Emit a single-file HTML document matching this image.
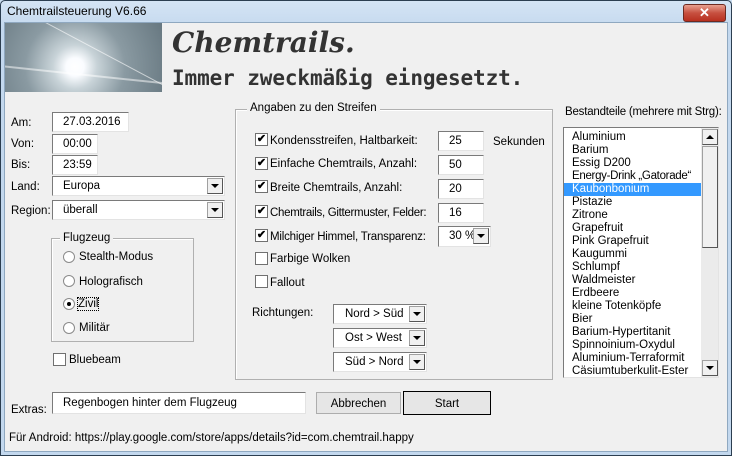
<!DOCTYPE html>
<html><head><meta charset="utf-8"><style>
*{box-sizing:border-box;margin:0;padding:0}
body{width:732px;height:456px;overflow:hidden;background:#c9dcef;font-family:"Liberation Sans",sans-serif;font-size:11.5px;color:#000;position:relative}
.a{position:absolute;white-space:nowrap}
#frame{left:0;top:0;width:732px;height:456px;border:1px solid #2c3e50;border-radius:5px 5px 0 0;background:linear-gradient(#d4e4f4,#c3d8ee 30px)}
#client{left:4px;top:22px;width:724px;height:430px;background:#f0f0f0;border:1px solid #8fa8c0}
.tb{background:#fff;border:1px solid #7a7a7a;border-right-color:#e3e3e3;border-bottom-color:#e3e3e3;height:20px;padding:3px 0 0 10px;white-space:nowrap}
.dd{position:absolute;right:1px;top:1px;width:16px;height:16px;background:#f0f0f0;border:1px solid #a0a0a0;border-right-color:#555;border-bottom-color:#555}
.dd:after{content:"";position:absolute;left:3px;top:5px;border-left:4px solid transparent;border-right:4px solid transparent;border-top:4px solid #000}
.cb{width:13px;height:13px;background:#fff;border:1px solid #707070}
.ck{font-size:11px;line-height:11px;text-align:center;font-weight:bold}
.rb{width:12px;height:12px;border-radius:50%;background:#fff;border:1px solid #8a8a8a}
.grp{border:1px solid #b0b0b0;box-shadow:1px 1px 0 #fff inset}
.gl{background:#f0f0f0;padding:0 3px}
.btn{background:#e6e6e6;border:1px solid #adadad;text-align:center;padding-top:5px;height:22px}
.li{position:absolute;left:0;width:137px;height:13px;line-height:13px;padding-left:8px;white-space:nowrap;overflow:hidden}
</style></head><body>
<div id="frame" class="a"></div>
<div class="a" style="left:7px;top:4px;font-size:12px">Chemtrailsteuerung V6.66</div>
<div class="a" style="left:683px;top:4px;width:43px;height:18px;border:1px solid #6d2a21;border-radius:3px;background:linear-gradient(#e8a090,#c75040 50%,#b83020);color:#fff;font-weight:bold;text-align:center;line-height:16px;font-size:13px">✕</div>
<div id="client" class="a"></div>
<div class="a" style="left:5px;top:23px;width:157px;height:69px;background:radial-gradient(circle at 70px 44px,#fff 0,#fafcff 9px,#c8d3d8 22px,#8a9aa2 50px,#5e6f78 110px);overflow:hidden">
<div class="a" style="left:-20px;top:20px;width:200px;height:1px;background:rgba(255,255,255,.6);transform:rotate(28deg)"></div>
<div class="a" style="left:-10px;top:52px;width:200px;height:2px;background:rgba(255,255,255,.5);transform:rotate(6deg)"></div></div>
<div class="a" style="left:172px;top:26px;font-family:'DejaVu Serif',serif;font-weight:bold;font-style:italic;font-size:28px;color:#333">Chemtrails.</div>
<div class="a" style="left:172px;top:66px;font-family:'DejaVu Sans Mono',monospace;font-weight:bold;font-size:21px;color:#333;letter-spacing:-0.1px">Immer zweckmäßig eingesetzt.</div>

<div class="a" style="left:11px;top:117px">Am:</div>
<div class="a tb" style="left:52px;top:112px;width:77px">27.03.2016</div>
<div class="a" style="left:11px;top:138px">Von:</div>
<div class="a tb" style="left:52px;top:134px;width:46px">00:00</div>
<div class="a" style="left:11px;top:159px">Bis:</div>
<div class="a tb" style="left:52px;top:155px;width:46px">23:59</div>
<div class="a" style="left:11px;top:181px">Land:</div>
<div class="a tb" style="left:52px;top:176px;width:173px">Europa<div class="dd"></div></div>
<div class="a" style="left:11px;top:205px">Region:</div>
<div class="a tb" style="left:52px;top:200px;width:173px">überall<div class="dd"></div></div>

<div class="a grp" style="left:51px;top:238px;width:143px;height:104px"></div>
<div class="a gl" style="left:60px;top:232px">Flugzeug</div>
<div class="a rb" style="left:63px;top:251px"></div><div class="a" style="left:79px;top:251px">Stealth-Modus</div>
<div class="a rb" style="left:63px;top:275px"></div><div class="a" style="left:79px;top:276px">Holografisch</div>
<div class="a rb" style="left:63px;top:298px"><div class="a" style="left:3px;top:3px;width:4px;height:4px;border-radius:50%;background:#000"></div></div><div class="a" style="left:78px;top:298px;outline:1px dotted #000">Zivil</div>
<div class="a rb" style="left:63px;top:322px"></div><div class="a" style="left:79px;top:322px">Militär</div>
<div class="a cb" style="left:53px;top:353px"></div><div class="a" style="left:69px;top:354px">Bluebeam</div>

<div class="a grp" style="left:235px;top:109px;width:318px;height:271px"></div>
<div class="a gl" style="left:247px;top:102px">Angaben zu den Streifen</div>
<div class="a cb ck" style="left:255px;top:133px">✔</div><div class="a" style="left:270px;top:135px">Kondensstreifen, Haltbarkeit:</div>
<div class="a tb" style="left:438px;top:131px;width:46px">25</div><div class="a" style="left:493px;top:136px">Sekunden</div>
<div class="a cb ck" style="left:255px;top:157px">✔</div><div class="a" style="left:270px;top:158px">Einfache Chemtrails, Anzahl:</div>
<div class="a tb" style="left:438px;top:155px;width:46px">50</div>
<div class="a cb ck" style="left:255px;top:180px">✔</div><div class="a" style="left:270px;top:182px">Breite Chemtrails, Anzahl:</div>
<div class="a tb" style="left:438px;top:179px;width:46px">20</div>
<div class="a cb ck" style="left:255px;top:205px">✔</div><div class="a" style="left:270px;top:207px;letter-spacing:-0.3px">Chemtrails, Gittermuster, Felder:</div>
<div class="a tb" style="left:438px;top:203px;width:46px">16</div>
<div class="a cb ck" style="left:255px;top:229px">✔</div><div class="a" style="left:270px;top:231px;letter-spacing:-0.2px">Milchiger Himmel, Transparenz:</div>
<div class="a tb" style="left:438px;top:226px;width:53px;height:21px">30 %<div class="dd"></div></div>
<div class="a cb" style="left:255px;top:252px"></div><div class="a" style="left:270px;top:253px">Farbige Wolken</div>
<div class="a cb" style="left:255px;top:275px"></div><div class="a" style="left:270px;top:277px">Fallout</div>
<div class="a" style="left:252px;top:307px">Richtungen:</div>
<div class="a tb" style="left:333px;top:304px;width:94px;padding-left:11px">Nord &gt; Süd<div class="dd"></div></div>
<div class="a tb" style="left:333px;top:328px;width:94px;padding-left:11px">Ost &gt; West<div class="dd"></div></div>
<div class="a tb" style="left:333px;top:352px;width:94px;padding-left:11px">Süd &gt; Nord<div class="dd"></div></div>

<div class="a" style="left:565px;top:106px;letter-spacing:-0.2px">Bestandteile (mehrere mit Strg):</div>
<div class="a" style="left:563px;top:127px;width:156px;height:251px;background:#fff;border:1px solid #7a7a7a;border-right-color:#e3e3e3;border-bottom-color:#e3e3e3;overflow:hidden">
<div class="a" style="left:0;top:1px;width:137px;height:249px">
<div class="li" style="top:2px">Aluminium</div>
<div class="li" style="top:15px">Barium</div>
<div class="li" style="top:28px">Essig D200</div>
<div class="li" style="top:41px;letter-spacing:-0.3px">Energy-Drink „Gatorade“</div>
<div class="li" style="top:54px;background:#3399ff;color:#fff">Kaubonbonium</div>
<div class="li" style="top:67px">Pistazie</div>
<div class="li" style="top:80px">Zitrone</div>
<div class="li" style="top:93px">Grapefruit</div>
<div class="li" style="top:106px">Pink Grapefruit</div>
<div class="li" style="top:119px">Kaugummi</div>
<div class="li" style="top:132px">Schlumpf</div>
<div class="li" style="top:145px">Waldmeister</div>
<div class="li" style="top:158px">Erdbeere</div>
<div class="li" style="top:171px">kleine Totenköpfe</div>
<div class="li" style="top:184px">Bier</div>
<div class="li" style="top:197px">Barium-Hypertitanit</div>
<div class="li" style="top:210px">Spinnoinium-Oxydul</div>
<div class="li" style="top:223px">Aluminium-Terraformit</div>
<div class="li" style="top:236px">Cäsiumtuberkulit-Ester</div>
</div>
<div class="a" style="left:137px;top:0;width:17px;height:249px;background:#ebebeb"></div>
<div class="a" style="left:138px;top:1px;width:16px;height:16px;background:#f0f0f0;border:1px solid #a0a0a0;border-right-color:#555;border-bottom-color:#555"><div class="a" style="left:3px;top:5px;border-left:4px solid transparent;border-right:4px solid transparent;border-bottom:4px solid #000"></div></div>
<div class="a" style="left:138px;top:18px;width:16px;height:102px;background:#f0f0f0;border:1px solid #a0a0a0;border-right-color:#555;border-bottom-color:#555"></div>
<div class="a" style="left:138px;top:232px;width:16px;height:16px;background:#f0f0f0;border:1px solid #a0a0a0;border-right-color:#555;border-bottom-color:#555"><div class="a" style="left:3px;top:5px;border-left:4px solid transparent;border-right:4px solid transparent;border-top:4px solid #000"></div></div>
</div>

<div class="a" style="left:11px;top:404px">Extras:</div>
<div class="a tb" style="left:52px;top:392px;width:254px;height:22px;padding-top:4px">Regenbogen hinter dem Flugzeug</div>
<div class="a btn" style="left:316px;top:392px;width:85px">Abbrechen</div>
<div class="a btn" style="left:403px;top:391px;width:88px;height:24px;border:1px solid #000;padding-top:6px">Start</div>
<div class="a" style="left:9px;top:432px">Für Android: https://play.google.com/store/apps/details?id=com.chemtrail.happy</div>
</body></html>
